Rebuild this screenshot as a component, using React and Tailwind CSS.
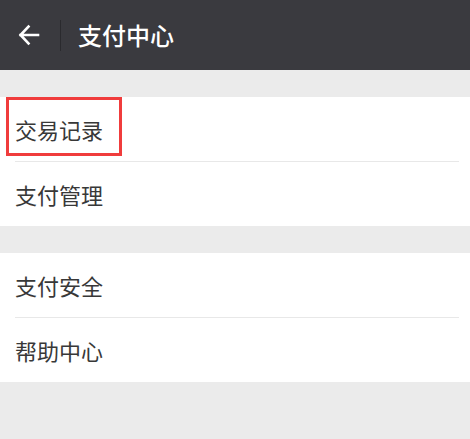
import React from 'react';

const font = { fontFamily: '"Noto Sans CJK SC", "Noto Sans", sans-serif' };

const Row = ({ label, divider }) => (
  <div className="pl-[15px]">
    <div className={`flex items-center mr-[11px] ${divider ? 'h-[65px] border-b border-[#e8e8e8]' : 'h-[64px]'}`}>
      <span className="text-[22px] text-[#383838] leading-none">{label}</span>
    </div>
  </div>
);

const App = () => {
  return (
    <div className="w-[470px] h-[439px] bg-[#ebebeb] relative overflow-hidden" style={font}>
      {/* Header */}
      <div className="h-[70px] bg-[#3a3a3f] flex items-center">
        <div className="w-[60px] flex items-center justify-center pl-[2px] pr-[4px]">
          <svg className="w-[24px] h-[24px] text-white" viewBox="0 0 24 24" fill="none" stroke="currentColor" strokeWidth={2.6} strokeLinecap="square">
            <path d="M21 12H3.5M11.5 3.5L3.5 12l8 8.5" />
          </svg>
        </div>
        <div className="w-px h-[31px] bg-[#2a2a2e]" />
        <span className="ml-[17px] text-[24px] text-white font-medium leading-none">支付中心</span>
      </div>

      {/* Group 1 */}
      <div className="mt-[27px] bg-white">
        <Row label="交易记录" divider />
        <Row label="支付管理" />
      </div>

      {/* Group 2 */}
      <div className="mt-[27px] bg-white">
        <Row label="支付安全" divider />
        <Row label="帮助中心" />
      </div>

      {/* highlight box */}
      <div className="absolute left-[6px] top-[97px] w-[116px] h-[59px] border-[3px] border-[#f03c3c]" />
    </div>
  );
};

export default App;
